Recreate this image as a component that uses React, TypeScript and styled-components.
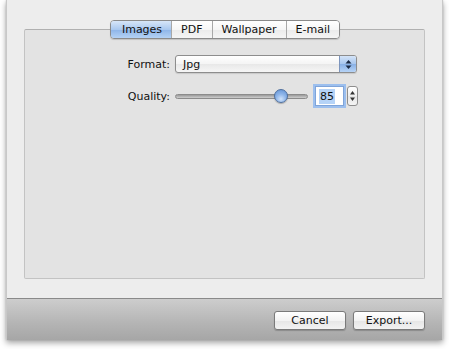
import React, { useState } from 'react'
import styled, { createGlobalStyle } from 'styled-components'

const GlobalStyle = createGlobalStyle`
  html, body {
    margin: 0;
    padding: 0;
    background: #ffffff;
  }
  body {
    font-family: "DejaVu Sans", "Liberation Sans", sans-serif;
    font-size: 11px;
    color: #000;
  }
`

const tabs = ['Images', 'PDF', 'Wallpaper', 'E-mail']

const App: React.FC = () => {
  const [active, setActive] = useState(0)
  const quality = 85

  return (
    <>
      <GlobalStyle />
      <Page>
        <Window>
          <Content>
            <GroupBox>
              <Tabs>
                {tabs.map((t, i) => (
                  <Tab key={t} $active={i === active} onClick={() => setActive(i)}>
                    {t}
                  </Tab>
                ))}
              </Tabs>

              <Form>
                <Label>Format:</Label>
                <Popup>
                  <PopupText>Jpg</PopupText>
                  <PopupArrows>
                    <svg width="7" height="11" viewBox="0 0 7 11">
                      <path d="M3.5 1 L6.5 4.5 L0.5 4.5 Z" fill="#1b2a44" />
                      <path d="M3.5 10 L6.5 6.5 L0.5 6.5 Z" fill="#1b2a44" />
                    </svg>
                  </PopupArrows>
                </Popup>

                <Label>Quality:</Label>
                <QualityRow>
                  <Slider>
                    <Track />
                    <Knob style={{ left: `${(quality - 5) / 100 * 100}%` }} />
                  </Slider>
                  <NumberField>
                    <span>{quality}</span>
                  </NumberField>
                  <Stepper>
                    <svg width="7" height="14" viewBox="0 0 7 14">
                      <path d="M3.5 2 L6 5.5 L1 5.5 Z" fill="#333" />
                      <path d="M3.5 12 L6 8.5 L1 8.5 Z" fill="#333" />
                    </svg>
                  </Stepper>
                </QualityRow>
              </Form>
            </GroupBox>
          </Content>

          <BottomBar>
            <Button>Cancel</Button>
            <Button>Export...</Button>
          </BottomBar>
        </Window>
      </Page>
    </>
  )
}

const Page = styled.div`
  width: 449px;
  height: 349px;
  padding-left: 6px;
  box-sizing: border-box;
`

const Window = styled.div`
  width: 437px;
  height: 340px;
  display: flex;
  flex-direction: column;
  background: #ededed;
  border-left: 1px solid #c8c8c8;
  border-right: 1px solid #c8c8c8;
  box-sizing: border-box;
  box-shadow: 0 3px 6px rgba(0, 0, 0, 0.35), 0 0 2px rgba(0, 0, 0, 0.15);
`

const Content = styled.div`
  flex: 1;
  display: flex;
  flex-direction: column;
  padding: 29px 17px 19px 17px;
`

const GroupBox = styled.div`
  flex: 1;
  display: flex;
  flex-direction: column;
  align-items: center;
  background: #e3e3e3;
  border: 1px solid #c3c3c3;
  border-top-color: #b0b0b0;
  border-radius: 2px;
`

const Tabs = styled.div`
  display: flex;
  height: 19px;
  margin-top: -10px;
  margin-left: 1px;
  border: 1px solid #8a8a8a;
  border-radius: 4px;
  overflow: hidden;
  box-sizing: border-box;
  box-shadow: 0 1px 1px rgba(0, 0, 0, 0.15);
`

const Tab = styled.div<{ $active: boolean }>`
  display: flex;
  align-items: center;
  justify-content: center;
  padding: 0 9px;
  font-size: 11px;
  color: #111;
  cursor: default;
  background: ${(p) =>
    p.$active
      ? 'linear-gradient(#d7e6f8, #a9c8ef 50%, #8db4e8 51%, #b4d2f5)'
      : 'linear-gradient(#ffffff, #f6f6f6 50%, #ebebeb 51%, #f5f5f5)'};
  & + & {
    border-left: 1px solid #a8a8a8;
  }
  &:first-child {
    padding: 0 9px 0 11px;
  }
`

const Form = styled.div`
  align-self: stretch;
  display: grid;
  grid-template-columns: 145px auto;
  column-gap: 5px;
  row-gap: 13px;
  align-items: center;
  margin-top: 16px;
`

const Label = styled.div`
  text-align: right;
  font-size: 11px;
  color: #111;
`

const Popup = styled.div`
  width: 182px;
  height: 18px;
  display: flex;
  border: 1px solid #8d8d8d;
  border-radius: 3px;
  box-sizing: border-box;
  overflow: hidden;
  background: linear-gradient(#ffffff, #f4f4f4 50%, #e8e8e8 51%, #f6f6f6);
  box-shadow: 0 1px 1px rgba(0, 0, 0, 0.12);
`

const PopupText = styled.div`
  flex: 1;
  display: flex;
  align-items: center;
  padding-left: 7px;
  font-size: 11px;
  color: #111;
`

const PopupArrows = styled.div`
  width: 16px;
  display: flex;
  align-items: center;
  justify-content: center;
  border-left: 1px solid #7d95bd;
  background: linear-gradient(#d4e4f8, #a7c6ee 50%, #88b0e6 51%, #b6d3f6);
`

const QualityRow = styled.div`
  display: flex;
  align-items: center;
`

const Slider = styled.div`
  position: relative;
  width: 133px;
  height: 16px;
  display: flex;
  align-items: center;
`

const Track = styled.div`
  width: 100%;
  height: 5px;
  border-radius: 3px;
  border: 1px solid #8c8c8c;
  box-sizing: border-box;
  background: linear-gradient(#9a9a9a, #cfcfcf);
`

const Knob = styled.div`
  position: absolute;
  top: 1px;
  width: 14px;
  height: 14px;
  margin-left: -7px;
  border-radius: 50%;
  box-sizing: border-box;
  border: 1px solid #4e6f9e;
  background: radial-gradient(circle at 50% 75%, #cfe2fa 0%, #8fb6ea 45%, #5e8fd3 100%);
  box-shadow: 0 1px 1px rgba(0, 0, 0, 0.25);
`

const NumberField = styled.div`
  width: 29px;
  height: 20px;
  margin-left: 7px;
  box-sizing: border-box;
  display: flex;
  align-items: center;
  padding-left: 3px;
  font-size: 11px;
  color: #111;
  background: #fff;
  border: 1px solid #7fa4d9;
  box-shadow: 0 0 0 2px #9cbfee;
  span {
    background: #b5d3f7;
    padding: 1px 1px;
  }
`

const Stepper = styled.div`
  width: 11px;
  height: 20px;
  margin-left: 3px;
  box-sizing: border-box;
  display: flex;
  align-items: center;
  justify-content: center;
  border: 1px solid #8d8d8d;
  border-radius: 3px;
  background: linear-gradient(#ffffff, #efefef 50%, #e6e6e6 51%, #f4f4f4);
`

const BottomBar = styled.div`
  height: 42px;
  display: flex;
  align-items: center;
  justify-content: flex-end;
  gap: 7px;
  padding: 1px 17px 0 0;
  box-sizing: border-box;
  border-top: 1px solid #8a8a8a;
  background: linear-gradient(#cdcdcd, #b4b4b4 60%, #a6a6a6);
`

const Button = styled.div`
  min-width: 72px;
  height: 19px;
  padding: 0 8px;
  box-sizing: border-box;
  display: flex;
  align-items: center;
  justify-content: center;
  font-size: 11px;
  color: #111;
  border: 1px solid #7a7a7a;
  border-radius: 3px;
  background: linear-gradient(#ffffff, #f3f3f3 50%, #e6e6e6 51%, #f2f2f2);
  box-shadow: 0 1px 1px rgba(0, 0, 0, 0.2);
  cursor: default;
`

export default App
